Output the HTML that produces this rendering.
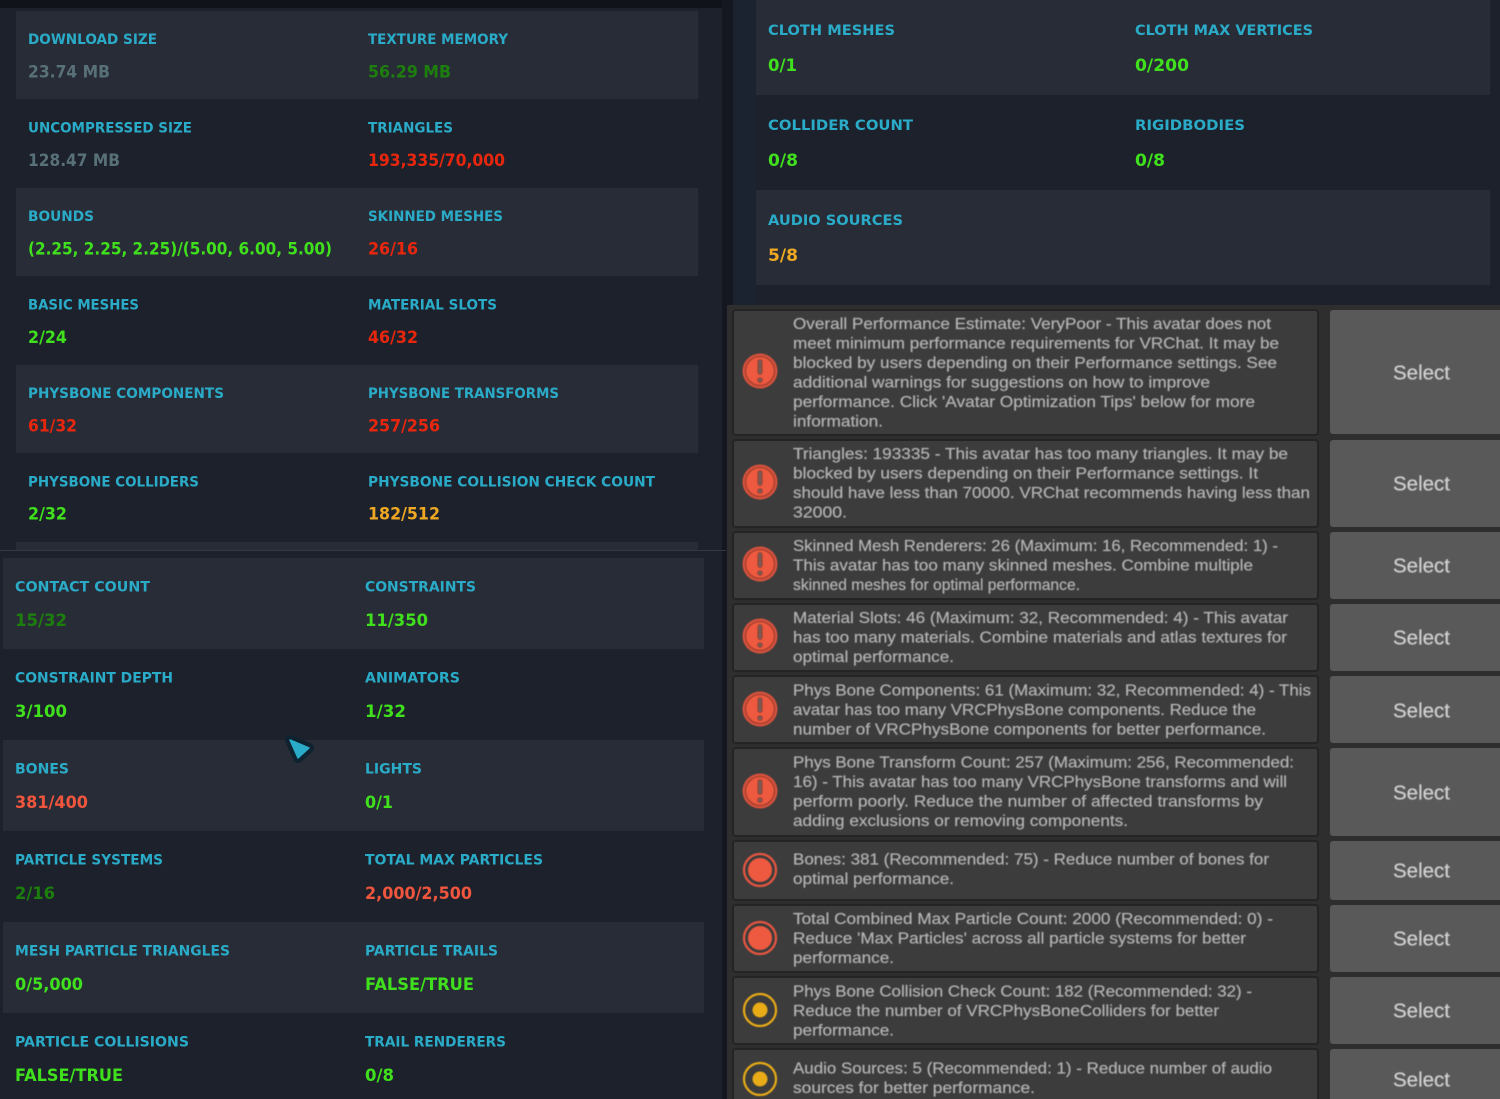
<!DOCTYPE html>
<html><head><meta charset="utf-8"><style>
html,body{margin:0;padding:0;background:#1c212c;width:1500px;height:1099px;overflow:hidden}
svg{display:block}
text{white-space:pre}
.l{font:bold 14.5px "DejaVu Sans",sans-serif;fill:#2aabc8}
.v{font:bold 16.5px "DejaVu Sans",sans-serif}
.w{font:16px "Liberation Sans",sans-serif;fill:#b4b4b4;stroke:#b4b4b4;stroke-width:.2}
.s{font:20px "Liberation Sans",sans-serif;fill:#d2d2d2;stroke:#d2d2d2;stroke-width:.2}
.g{fill:#3fe01e}.d{fill:#1f7f0a}.r{fill:#e8280c}.c{fill:#f0553c}.o{fill:#efa822}.y{fill:#587078}
.b{fill:#3c3c3c;stroke:#242424;stroke-width:2}
.bt{fill:#595959}
.o1{fill:#d9533c}.o2{fill:#ee5a40;stroke:#a8412f;stroke-width:1.6}.ex{fill:#7a5a52;stroke:#8f3a2a;stroke-width:.8}
</style></head><body>
<svg xmlns="http://www.w3.org/2000/svg" width="1500" height="1099" viewBox="0 0 1500 1099">
<defs>
<filter id="a" x="-5%" y="-5%" width="110%" height="110%"><feGaussianBlur stdDeviation="0.3"/></filter>
<filter id="b" x="-5%" y="-5%" width="110%" height="110%"><feGaussianBlur stdDeviation="0.5"/></filter>
<filter id="c" x="-30%" y="-30%" width="160%" height="160%"><feGaussianBlur stdDeviation="0.5"/></filter>
</defs>
<rect width="1500" height="1099" fill="#1c212c"/>
<rect x="733" width="23" height="305" fill="#1b2330"/>
<rect width="733" height="8" fill="#11131a"/>
<rect x="722" width="11" height="305" fill="#14171f"/>
<rect x="722" y="305" width="5" height="794" fill="#14171f"/>
<rect x="16" y="11" width="682" height="88" fill="#282c37"/>
<rect x="16" y="188" width="682" height="88" fill="#282c37"/>
<rect x="16" y="365" width="682" height="88" fill="#282c37"/>
<rect x="16" y="542" width="682" height="8" fill="#282c37"/>
<rect x="0" y="550" width="726" height="1" fill="#333843"/>
<rect x="3" y="558" width="701" height="91" fill="#282c37"/>
<rect x="3" y="740" width="701" height="91" fill="#282c37"/>
<rect x="3" y="922" width="701" height="91" fill="#282c37"/>
<rect x="756" y="0" width="734" height="95" fill="#282c37"/>
<rect x="756" y="190" width="734" height="95" fill="#282c37"/>

<g filter="url(#a)">
<text class="l" x="28" y="44.2" textLength="129" lengthAdjust="spacingAndGlyphs">DOWNLOAD SIZE</text>
<text class="l" x="368" y="44.2" textLength="140" lengthAdjust="spacingAndGlyphs">TEXTURE MEMORY</text>
<text class="v y" x="28" y="77.3" textLength="82" lengthAdjust="spacingAndGlyphs">23.74 MB</text>
<text class="v d" x="368" y="77.3" textLength="83" lengthAdjust="spacingAndGlyphs">56.29 MB</text>
<text class="l" x="28" y="132.6" textLength="164" lengthAdjust="spacingAndGlyphs">UNCOMPRESSED SIZE</text>
<text class="l" x="368" y="132.6" textLength="85" lengthAdjust="spacingAndGlyphs">TRIANGLES</text>
<text class="v y" x="28" y="166" textLength="92" lengthAdjust="spacingAndGlyphs">128.47 MB</text>
<text class="v r" x="368" y="166" textLength="137" lengthAdjust="spacingAndGlyphs">193,335/70,000</text>
<text class="l" x="28" y="221.2" textLength="66" lengthAdjust="spacingAndGlyphs">BOUNDS</text>
<text class="l" x="368" y="221.2" textLength="135" lengthAdjust="spacingAndGlyphs">SKINNED MESHES</text>
<text class="v g" x="28" y="254.5" textLength="304" lengthAdjust="spacingAndGlyphs">(2.25, 2.25, 2.25)/(5.00, 6.00, 5.00)</text>
<text class="v r" x="368" y="254.5" textLength="50" lengthAdjust="spacingAndGlyphs">26/16</text>
<text class="l" x="28" y="309.6" textLength="111" lengthAdjust="spacingAndGlyphs">BASIC MESHES</text>
<text class="l" x="368" y="309.6" textLength="129" lengthAdjust="spacingAndGlyphs">MATERIAL SLOTS</text>
<text class="v g" x="28" y="343" textLength="39" lengthAdjust="spacingAndGlyphs">2/24</text>
<text class="v r" x="368" y="343" textLength="50" lengthAdjust="spacingAndGlyphs">46/32</text>
<text class="l" x="28" y="398" textLength="196" lengthAdjust="spacingAndGlyphs">PHYSBONE COMPONENTS</text>
<text class="l" x="368" y="398" textLength="191" lengthAdjust="spacingAndGlyphs">PHYSBONE TRANSFORMS</text>
<text class="v r" x="28" y="431.5" textLength="49" lengthAdjust="spacingAndGlyphs">61/32</text>
<text class="v r" x="368" y="431.5" textLength="72" lengthAdjust="spacingAndGlyphs">257/256</text>
<text class="l" x="28" y="486.6" textLength="171" lengthAdjust="spacingAndGlyphs">PHYSBONE COLLIDERS</text>
<text class="l" x="368" y="486.6" textLength="287" lengthAdjust="spacingAndGlyphs">PHYSBONE COLLISION CHECK COUNT</text>
<text class="v g" x="28" y="519.5" textLength="39" lengthAdjust="spacingAndGlyphs">2/32</text>
<text class="v o" x="368" y="519.5" textLength="72" lengthAdjust="spacingAndGlyphs">182/512</text>

<text class="l" x="15" y="591.7" textLength="135" lengthAdjust="spacingAndGlyphs">CONTACT COUNT</text>
<text class="l" x="365" y="591.7" textLength="111" lengthAdjust="spacingAndGlyphs">CONSTRAINTS</text>
<text class="v d" x="15" y="625.8" textLength="52" lengthAdjust="spacingAndGlyphs">15/32</text>
<text class="v g" x="365" y="625.8" textLength="63" lengthAdjust="spacingAndGlyphs">11/350</text>
<text class="l" x="15" y="682.7" textLength="158" lengthAdjust="spacingAndGlyphs">CONSTRAINT DEPTH</text>
<text class="l" x="365" y="682.7" textLength="95" lengthAdjust="spacingAndGlyphs">ANIMATORS</text>
<text class="v g" x="15" y="716.8" textLength="52" lengthAdjust="spacingAndGlyphs">3/100</text>
<text class="v g" x="365" y="716.8" textLength="41" lengthAdjust="spacingAndGlyphs">1/32</text>
<text class="l" x="15" y="773.7" textLength="54" lengthAdjust="spacingAndGlyphs">BONES</text>
<text class="l" x="365" y="773.7" textLength="57" lengthAdjust="spacingAndGlyphs">LIGHTS</text>
<text class="v c" x="15" y="807.8" textLength="73" lengthAdjust="spacingAndGlyphs">381/400</text>
<text class="v g" x="365" y="807.8" textLength="28" lengthAdjust="spacingAndGlyphs">0/1</text>
<text class="l" x="15" y="864.7" textLength="148" lengthAdjust="spacingAndGlyphs">PARTICLE SYSTEMS</text>
<text class="l" x="365" y="864.7" textLength="178" lengthAdjust="spacingAndGlyphs">TOTAL MAX PARTICLES</text>
<text class="v d" x="15" y="899" textLength="40" lengthAdjust="spacingAndGlyphs">2/16</text>
<text class="v c" x="365" y="899" textLength="107" lengthAdjust="spacingAndGlyphs">2,000/2,500</text>
<text class="l" x="15" y="955.7" textLength="215" lengthAdjust="spacingAndGlyphs">MESH PARTICLE TRIANGLES</text>
<text class="l" x="365" y="955.7" textLength="133" lengthAdjust="spacingAndGlyphs">PARTICLE TRAILS</text>
<text class="v g" x="15" y="990" textLength="68" lengthAdjust="spacingAndGlyphs">0/5,000</text>
<text class="v g" x="365" y="990" textLength="109" lengthAdjust="spacingAndGlyphs">FALSE/TRUE</text>
<text class="l" x="15" y="1046.7" textLength="174" lengthAdjust="spacingAndGlyphs">PARTICLE COLLISIONS</text>
<text class="l" x="365" y="1046.7" textLength="141" lengthAdjust="spacingAndGlyphs">TRAIL RENDERERS</text>
<text class="v g" x="15" y="1081" textLength="108" lengthAdjust="spacingAndGlyphs">FALSE/TRUE</text>
<text class="v g" x="365" y="1081" textLength="29" lengthAdjust="spacingAndGlyphs">0/8</text>

<text class="l" x="768" y="35" textLength="127" lengthAdjust="spacingAndGlyphs">CLOTH MESHES</text>
<text class="l" x="1135" y="35" textLength="178" lengthAdjust="spacingAndGlyphs">CLOTH MAX VERTICES</text>
<text class="v g" x="768" y="71" textLength="29" lengthAdjust="spacingAndGlyphs">0/1</text>
<text class="v g" x="1135" y="71" textLength="54" lengthAdjust="spacingAndGlyphs">0/200</text>
<text class="l" x="768" y="130" textLength="145" lengthAdjust="spacingAndGlyphs">COLLIDER COUNT</text>
<text class="l" x="1135" y="130" textLength="110" lengthAdjust="spacingAndGlyphs">RIGIDBODIES</text>
<text class="v g" x="768" y="166" textLength="30" lengthAdjust="spacingAndGlyphs">0/8</text>
<text class="v g" x="1135" y="166" textLength="30" lengthAdjust="spacingAndGlyphs">0/8</text>
<text class="l" x="768" y="225" textLength="135" lengthAdjust="spacingAndGlyphs">AUDIO SOURCES</text>
<text class="v o" x="768" y="261" textLength="30" lengthAdjust="spacingAndGlyphs">5/8</text>
</g>

<path d="M290 740 L309 748 L298 758 Z" fill="#0f2230" stroke="#0f2230" stroke-width="10" stroke-linejoin="round"/>
<path d="M290 740 L309 748 L298 758 Z" fill="#2aabc8" stroke="#2aabc8" stroke-width="1.5" stroke-linejoin="round"/>

<rect x="727" y="305" width="773" height="794" fill="#2e2e2e"/>
<rect x="733" y="310" width="585" height="125" rx="3" class="b"/>
<rect x="733" y="440" width="585" height="87" rx="3" class="b"/>
<rect x="733" y="532" width="585" height="67" rx="3" class="b"/>
<rect x="733" y="604" width="585" height="67" rx="3" class="b"/>
<rect x="733" y="676" width="585" height="67" rx="3" class="b"/>
<rect x="733" y="748" width="585" height="88" rx="3" class="b"/>
<rect x="733" y="841" width="585" height="59" rx="3" class="b"/>
<rect x="733" y="905" width="585" height="67" rx="3" class="b"/>
<rect x="733" y="977" width="585" height="67" rx="3" class="b"/>
<rect x="733" y="1049" width="585" height="60" rx="3" class="b"/>
<rect x="1330" y="310" width="175" height="124" rx="3" class="bt"/>
<rect x="1330" y="440" width="175" height="87" rx="3" class="bt"/>
<rect x="1330" y="532" width="175" height="67" rx="3" class="bt"/>
<rect x="1330" y="604" width="175" height="67" rx="3" class="bt"/>
<rect x="1330" y="676" width="175" height="67" rx="3" class="bt"/>
<rect x="1330" y="748" width="175" height="88" rx="3" class="bt"/>
<rect x="1330" y="841" width="175" height="59" rx="3" class="bt"/>
<rect x="1330" y="905" width="175" height="67" rx="3" class="bt"/>
<rect x="1330" y="977" width="175" height="67" rx="3" class="bt"/>
<rect x="1330" y="1049" width="175" height="60" rx="3" class="bt"/>
<g filter="url(#b)">
<text class="s" x="1393" y="379.500" textLength="57" lengthAdjust="spacingAndGlyphs">Select</text>
<text class="s" x="1393" y="490.500" textLength="57" lengthAdjust="spacingAndGlyphs">Select</text>
<text class="s" x="1393" y="572.500" textLength="57" lengthAdjust="spacingAndGlyphs">Select</text>
<text class="s" x="1393" y="644.500" textLength="57" lengthAdjust="spacingAndGlyphs">Select</text>
<text class="s" x="1393" y="717.500" textLength="57" lengthAdjust="spacingAndGlyphs">Select</text>
<text class="s" x="1393" y="799.500" textLength="57" lengthAdjust="spacingAndGlyphs">Select</text>
<text class="s" x="1393" y="877.500" textLength="57" lengthAdjust="spacingAndGlyphs">Select</text>
<text class="s" x="1393" y="945.500" textLength="57" lengthAdjust="spacingAndGlyphs">Select</text>
<text class="s" x="1393" y="1017.500" textLength="57" lengthAdjust="spacingAndGlyphs">Select</text>
<text class="s" x="1393" y="1086.500" textLength="57" lengthAdjust="spacingAndGlyphs">Select</text>
</g>

<g filter="url(#c)">
<g><circle cx="760" cy="371" r="17.500" class="o1"/><circle cx="760" cy="371" r="14.500" class="o2"/><rect x="757.800" y="359.500" width="4.400" height="15" rx="2.200" class="ex"/><circle cx="760" cy="380" r="2.400" class="ex"/></g>
<g><circle cx="760" cy="482" r="17.500" class="o1"/><circle cx="760" cy="482" r="14.500" class="o2"/><rect x="757.800" y="470.500" width="4.400" height="15" rx="2.200" class="ex"/><circle cx="760" cy="491" r="2.400" class="ex"/></g>
<g><circle cx="760" cy="564" r="17.500" class="o1"/><circle cx="760" cy="564" r="14.500" class="o2"/><rect x="757.800" y="552.500" width="4.400" height="15" rx="2.200" class="ex"/><circle cx="760" cy="573" r="2.400" class="ex"/></g>
<g><circle cx="760" cy="636" r="17.500" class="o1"/><circle cx="760" cy="636" r="14.500" class="o2"/><rect x="757.800" y="624.500" width="4.400" height="15" rx="2.200" class="ex"/><circle cx="760" cy="645" r="2.400" class="ex"/></g>
<g><circle cx="760" cy="709" r="17.500" class="o1"/><circle cx="760" cy="709" r="14.500" class="o2"/><rect x="757.800" y="697.500" width="4.400" height="15" rx="2.200" class="ex"/><circle cx="760" cy="718" r="2.400" class="ex"/></g>
<g><circle cx="760" cy="791" r="17.500" class="o1"/><circle cx="760" cy="791" r="14.500" class="o2"/><rect x="757.800" y="779.500" width="4.400" height="15" rx="2.200" class="ex"/><circle cx="760" cy="800" r="2.400" class="ex"/></g>
<circle cx="760" cy="870" r="12" fill="#ee5a40"/><circle cx="760" cy="870" r="16" fill="none" stroke="#e9563f" stroke-width="2.200"/>
<circle cx="760" cy="938" r="12" fill="#ee5a40"/><circle cx="760" cy="938" r="16" fill="none" stroke="#e9563f" stroke-width="2.200"/>
<circle cx="760" cy="1010" r="7.500" fill="#e9ab17"/><circle cx="760" cy="1010" r="16" fill="none" stroke="#e9ab17" stroke-width="2.200"/>
<circle cx="760" cy="1079" r="7.500" fill="#e9ab17"/><circle cx="760" cy="1079" r="16" fill="none" stroke="#e9ab17" stroke-width="2.200"/>
</g>

<g filter="url(#b)">
<text class="w" x="793" y="329" textLength="478" lengthAdjust="spacingAndGlyphs">Overall Performance Estimate: VeryPoor - This avatar does not</text>
<text class="w" x="793" y="348.500" textLength="486" lengthAdjust="spacingAndGlyphs">meet minimum performance requirements for VRChat. It may be</text>
<text class="w" x="793" y="368" textLength="484" lengthAdjust="spacingAndGlyphs">blocked by users depending on their Performance settings. See</text>
<text class="w" x="793" y="387.500" textLength="417" lengthAdjust="spacingAndGlyphs">additional warnings for suggestions on how to improve</text>
<text class="w" x="793" y="407" textLength="462" lengthAdjust="spacingAndGlyphs">performance. Click 'Avatar Optimization Tips' below for more</text>
<text class="w" x="793" y="426.500" textLength="90" lengthAdjust="spacingAndGlyphs">information.</text>
<text class="w" x="793" y="459" textLength="495" lengthAdjust="spacingAndGlyphs">Triangles: 193335 - This avatar has too many triangles. It may be</text>
<text class="w" x="793" y="478.500" textLength="465" lengthAdjust="spacingAndGlyphs">blocked by users depending on their Performance settings. It</text>
<text class="w" x="793" y="498" textLength="517" lengthAdjust="spacingAndGlyphs">should have less than 70000. VRChat recommends having less than</text>
<text class="w" x="793" y="517.500" textLength="54" lengthAdjust="spacingAndGlyphs">32000.</text>
<text class="w" x="793" y="551" textLength="485" lengthAdjust="spacingAndGlyphs">Skinned Mesh Renderers: 26 (Maximum: 16, Recommended: 1) -</text>
<text class="w" x="793" y="570.500" textLength="460" lengthAdjust="spacingAndGlyphs">This avatar has too many skinned meshes. Combine multiple</text>
<text class="w" x="793" y="590" textLength="287" lengthAdjust="spacingAndGlyphs">skinned meshes for optimal performance.</text>
<text class="w" x="793" y="623" textLength="495" lengthAdjust="spacingAndGlyphs">Material Slots: 46 (Maximum: 32, Recommended: 4) - This avatar</text>
<text class="w" x="793" y="642.500" textLength="494" lengthAdjust="spacingAndGlyphs">has too many materials. Combine materials and atlas textures for</text>
<text class="w" x="793" y="662" textLength="161" lengthAdjust="spacingAndGlyphs">optimal performance.</text>
<text class="w" x="793" y="695.500" textLength="518" lengthAdjust="spacingAndGlyphs">Phys Bone Components: 61 (Maximum: 32, Recommended: 4) - This</text>
<text class="w" x="793" y="715" textLength="463" lengthAdjust="spacingAndGlyphs">avatar has too many VRCPhysBone components. Reduce the</text>
<text class="w" x="793" y="734.500" textLength="473" lengthAdjust="spacingAndGlyphs">number of VRCPhysBone components for better performance.</text>
<text class="w" x="793" y="767.500" textLength="501" lengthAdjust="spacingAndGlyphs">Phys Bone Transform Count: 257 (Maximum: 256, Recommended:</text>
<text class="w" x="793" y="787" textLength="494" lengthAdjust="spacingAndGlyphs">16) - This avatar has too many VRCPhysBone transforms and will</text>
<text class="w" x="793" y="806.500" textLength="470" lengthAdjust="spacingAndGlyphs">perform poorly. Reduce the number of affected transforms by</text>
<text class="w" x="793" y="826" textLength="335" lengthAdjust="spacingAndGlyphs">adding exclusions or removing components.</text>
<text class="w" x="793" y="864.500" textLength="476" lengthAdjust="spacingAndGlyphs">Bones: 381 (Recommended: 75) - Reduce number of bones for</text>
<text class="w" x="793" y="884" textLength="161" lengthAdjust="spacingAndGlyphs">optimal performance.</text>
<text class="w" x="793" y="924" textLength="480" lengthAdjust="spacingAndGlyphs">Total Combined Max Particle Count: 2000 (Recommended: 0) -</text>
<text class="w" x="793" y="943.500" textLength="453" lengthAdjust="spacingAndGlyphs">Reduce 'Max Particles' across all particle systems for better</text>
<text class="w" x="793" y="963" textLength="101" lengthAdjust="spacingAndGlyphs">performance.</text>
<text class="w" x="793" y="996.500" textLength="459" lengthAdjust="spacingAndGlyphs">Phys Bone Collision Check Count: 182 (Recommended: 32) -</text>
<text class="w" x="793" y="1016" textLength="426" lengthAdjust="spacingAndGlyphs">Reduce the number of VRCPhysBoneColliders for better</text>
<text class="w" x="793" y="1035.500" textLength="101" lengthAdjust="spacingAndGlyphs">performance.</text>
<text class="w" x="793" y="1073.500" textLength="479" lengthAdjust="spacingAndGlyphs">Audio Sources: 5 (Recommended: 1) - Reduce number of audio</text>
<text class="w" x="793" y="1093" textLength="242" lengthAdjust="spacingAndGlyphs">sources for better performance.</text>
</g>
</svg>
</body></html>
